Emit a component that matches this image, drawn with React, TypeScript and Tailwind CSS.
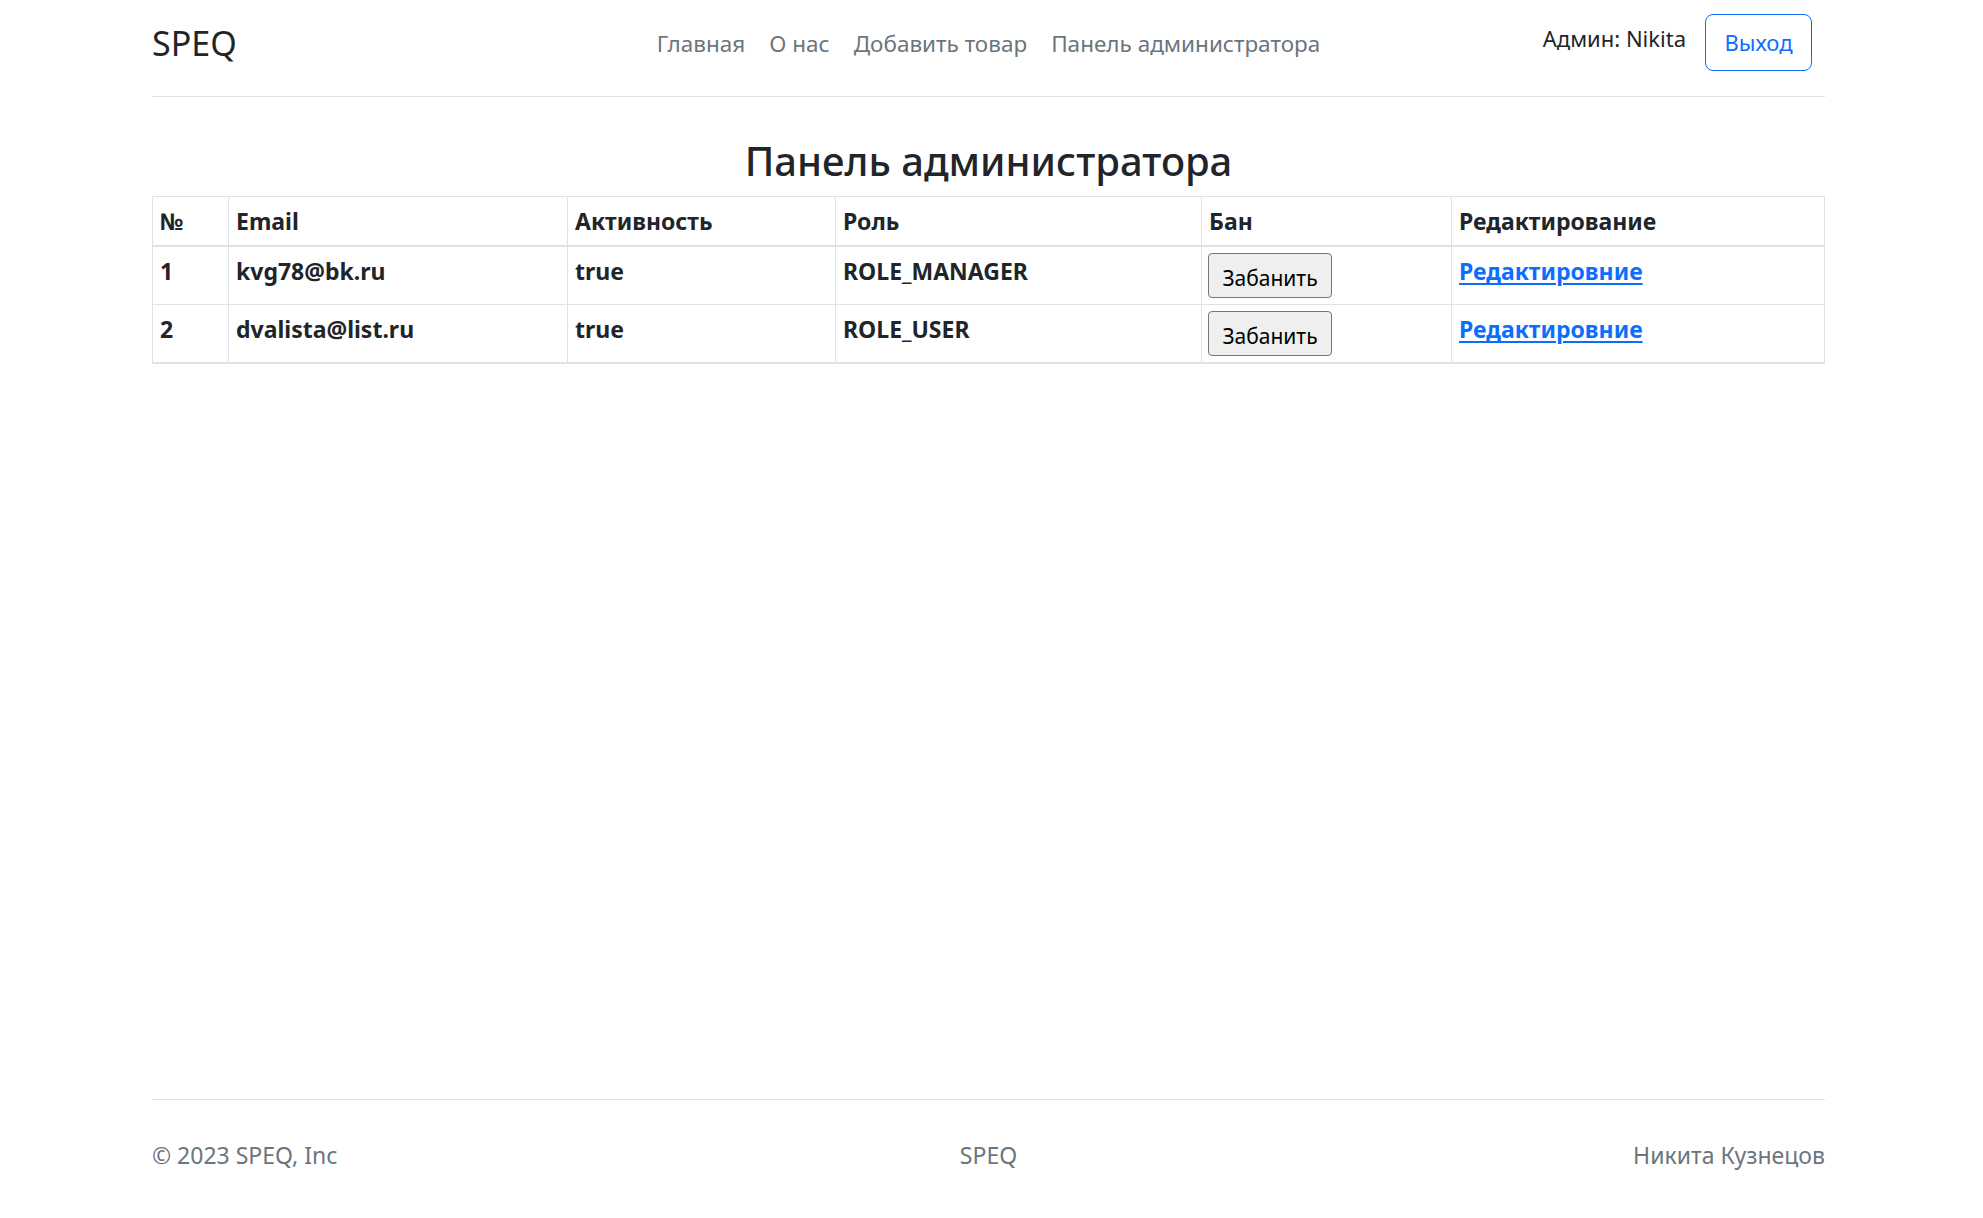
import React from "react";

const users = [
  { id: 1, email: "kvg78@bk.ru", active: "true", role: "ROLE_MANAGER" },
  { id: 2, email: "dvalista@list.ru", active: "true", role: "ROLE_USER" },
];

export default function App() {
  return (
    <div
      className="min-h-screen flex flex-col bg-white text-[#212529]"
      style={{ fontFamily: '"Noto Sans", "Open Sans", sans-serif' }}
    >
      <div className="ml-[152px] w-[1673px] flex-1 flex flex-col">
        <header className="grid grid-cols-[1fr_auto_1fr] items-center pt-[14px] pb-[25px] border-b border-[#dee2e6]">
          <div className="text-[34px] leading-[40px] text-[#212529] font-normal">SPEQ</div>
          <nav className="flex items-center text-[22.5px] leading-[33px] text-[#6c757d] mt-[2px]">
            <a className="px-[12px]">Главная</a>
            <a className="px-[12px]">О нас</a>
            <a className="px-[12px]">Добавить товар</a>
            <a className="px-[12px]">Панель администратора</a>
          </nav>
          <div className="flex items-center justify-end pr-[13px] gap-[19px]">
            <span className="text-[22px] leading-[33px] mb-[8px]">Админ: Nikita</span>
            <button className="w-[107px] h-[57px] border border-[#0d6efd] rounded-[8px] text-[#0d6efd] text-[22px] leading-[33px]">
              Выход
            </button>
          </div>
        </header>

        <h2 className="text-center text-[40px] leading-[48px] font-medium mt-[40px] mb-[11px]">
          Панель администратора
        </h2>

        <table className="w-[1672px] border-collapse table-fixed text-[23px] leading-[36px] font-bold">
          <colgroup>
            <col className="w-[76px]" />
            <col className="w-[339px]" />
            <col className="w-[268px]" />
            <col className="w-[366px]" />
            <col className="w-[250px]" />
            <col className="w-[373px]" />
          </colgroup>
          <thead>
            <tr className="border-b-2 border-[#dee2e6]">
              {["№", "Email", "Активность", "Роль", "Бан", "Редактирование"].map((h) => (
                <th
                  key={h}
                  className="border border-[#dee2e6] px-[7px] py-[6px] text-left align-top font-bold"
                >
                  {h}
                </th>
              ))}
            </tr>
          </thead>
          <tbody>
            {users.map((u, i) => (
              <tr key={u.id} className={i === users.length - 1 ? "border-b-2 border-[#dee2e6]" : ""}>
                <td className="border border-[#dee2e6] px-[7px] py-[6px] align-top">{u.id}</td>
                <td className="border border-[#dee2e6] px-[7px] py-[6px] align-top">{u.email}</td>
                <td className="border border-[#dee2e6] px-[7px] py-[6px] align-top">{u.active}</td>
                <td className="border border-[#dee2e6] px-[7px] py-[6px] align-top">{u.role}</td>
                <td className="border border-[#dee2e6] px-[6px] py-[6px] align-top">
                  <button className="w-[124px] h-[45px] bg-[#efefef] border border-[#767676] rounded-[4px] text-[21px] leading-[28px] font-normal text-black pt-[4px]">
                    Забанить
                  </button>
                </td>
                <td className="border border-[#dee2e6] px-[7px] py-[6px] align-top">
                  <a className="text-[#0d6efd] underline underline-offset-[3px] decoration-[2px]">Редактировние</a>
                </td>
              </tr>
            ))}
          </tbody>
        </table>
      </div>

      <footer className="ml-[152px] w-[1673px] border-t border-[#dee2e6] pt-[37px] pb-[45px] grid grid-cols-3 items-center text-[23px] leading-[36px] text-[#6c757d]">
        <div>© 2023 SPEQ, Inc</div>
        <div className="text-center">SPEQ</div>
        <div className="text-right">Никита Кузнецов</div>
      </footer>
    </div>
  );
}
